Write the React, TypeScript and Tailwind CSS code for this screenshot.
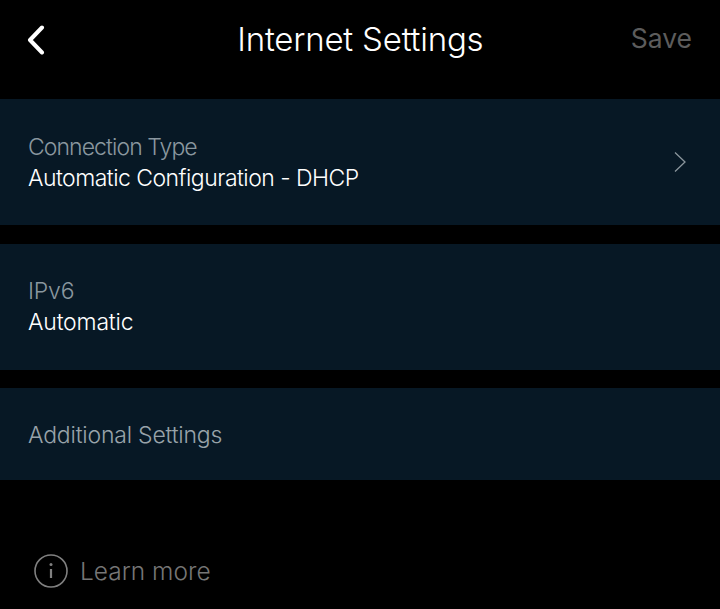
import React from "react";

const font = "font-['Inter','Noto_Sans',sans-serif] font-light";

function Row({ label, value, chevron, h, labelClass, valueClass, textClass }: { label: string; value?: string; chevron?: boolean; h: string; labelClass: string; valueClass?: string; textClass: string }) {
  return (
    <div className={`flex items-center justify-between bg-[#071825] pl-7 pr-[33px] ${h}`}>
      <div className={`flex flex-col ${textClass}`}>
        <span className={`text-[23px] leading-[31px] ${labelClass}`}>{label}</span>
        {value && <span className={`text-[23px] leading-[31px] text-white ${valueClass}`}>{value}</span>}
      </div>
      {chevron && (
        <svg width="14" height="22" viewBox="0 0 14 22" fill="none" stroke="#8b969d" strokeWidth="1.3" className="-ml-1">
          <path d="M2 1.5 L12 11 L2 20.5" />
        </svg>
      )}
    </div>
  );
}

export default function App() {
  return (
    <div className={`w-[720px] h-[609px] bg-black overflow-hidden flex flex-col ${font}`}>
      <header className="flex items-center justify-between h-[99px] pl-[27px] pr-[28px] pb-[20px]">
        <svg width="18" height="30" viewBox="0 0 18 30" fill="none" stroke="white" strokeWidth="4" strokeLinecap="round" strokeLinejoin="round">
          <path d="M15 2.5 L3 15 L15 27.5" />
        </svg>
        <h1 className="text-[33px] text-white tracking-[-0.2px] ml-[45px] mt-[1px]">Internet Settings</h1>
        <span className="text-[26.5px] text-[#5c5c5c] font-normal mb-[2px]">Save</span>
      </header>
      <Row label="Connection Type" value="Automatic Configuration - DHCP" chevron h="h-[126px]" textClass="pt-[2px]" labelClass="tracking-[-0.93px] text-[#8a979f]" valueClass="tracking-[-0.53px]" />
      <div className="h-[19px]" />
      <Row label="IPv6" value="Automatic" h="h-[126px]" textClass="" labelClass="tracking-[-0.2px] text-[#8a979f]" valueClass="tracking-[-0.2px]" />
      <div className="h-[18px]" />
      <Row label="Additional Settings" h="h-[92px]" textClass="pt-[2px]" labelClass="tracking-[-0.2px] text-[#98a3aa]" />
      <div className="flex items-center gap-[12px] pl-[34px] mt-[73px]">
        <svg width="34" height="34" viewBox="0 0 34 34" fill="none" stroke="#808080" strokeWidth="1.6">
          <circle cx="17" cy="17" r="16" />
          <path d="M17 15 V24" strokeWidth="2.2" />
          <circle cx="17" cy="10.5" r="1.5" fill="#808080" stroke="none" />
        </svg>
        <span className="text-[24.5px] text-[#767676]">Learn more</span>
      </div>
    </div>
  );
}
